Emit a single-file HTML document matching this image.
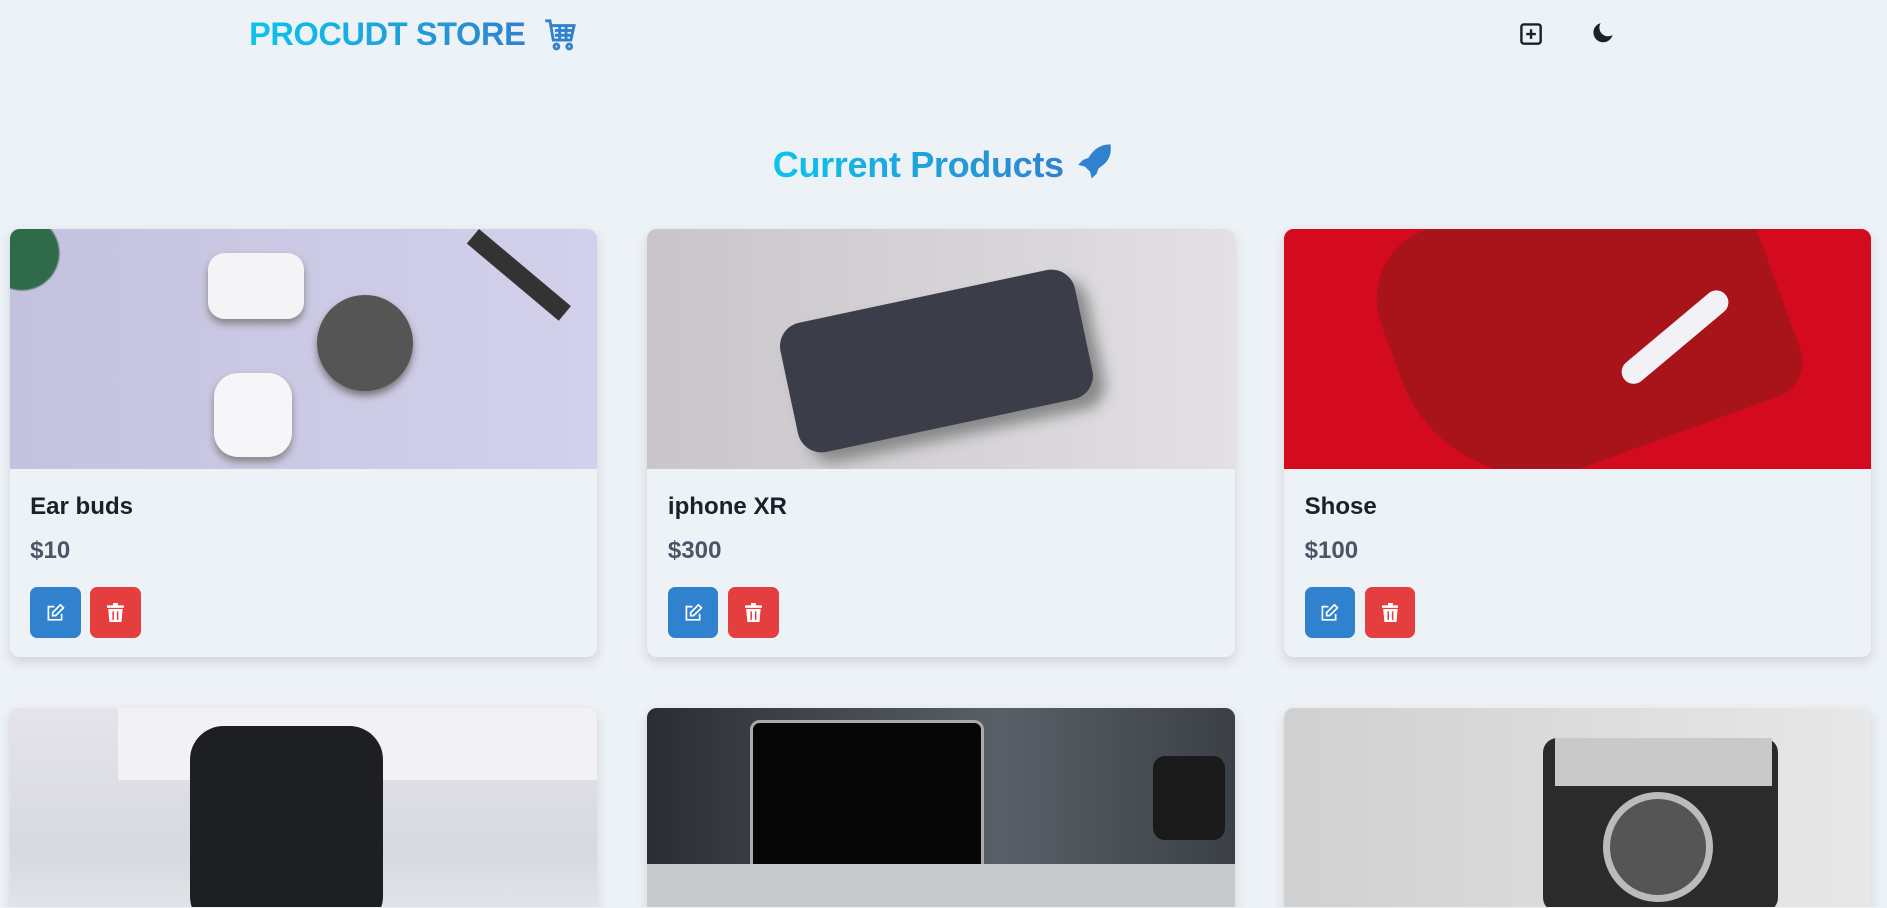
<!DOCTYPE html>
<html><head><meta charset="utf-8"><style>
html,body{margin:0;padding:0;background:#edf2f7;overflow:hidden;width:1887px;height:908px}
#w{zoom:1.2035;width:1568px;height:754px;position:relative;overflow:hidden;font-family:"Liberation Sans",Arial,sans-serif}
.grad{background:linear-gradient(90deg,#0bc5ea,#3182ce);-webkit-background-clip:text;background-clip:text;color:transparent;font-weight:bold}
.logo{position:absolute;left:207px;top:13px;font-size:27px;letter-spacing:-0.3px}
.title{position:absolute;left:0;width:1568px;top:117px;text-align:center;font-size:30px;letter-spacing:-0.3px}
.ico{position:absolute}
.card{position:absolute;width:488px;height:356px;border-radius:8px;background:#edf2f7;box-shadow:0 4px 10px rgba(0,0,0,.13);overflow:hidden}
.img{height:200px;position:relative;overflow:hidden}
.name{position:absolute;left:17px;top:220px;font-size:20px;font-weight:bold;color:#1a202c}
.price{position:absolute;left:17px;top:256px;font-size:20px;font-weight:bold;color:#4a5568}
.b{position:absolute;top:298px;width:42px;height:42px;border-radius:6px;display:flex;align-items:center;justify-content:center}
.e{left:17px;background:#3182ce}.d{left:67px;background:#e53e3e}
</style></head><body><div id="w">
<div class="logo"><span class="grad">PROCUDT STORE</span></div>
<svg class="ico" style="left:450px;top:13px" width="32" height="32" viewBox="0 0 24 24" fill="none" stroke="#3182ce" stroke-width="1.8"><path d="M2 3h3l2 12h11l2-9H6"/><path d="M8 9h11M8 12h10M11 6v9M15 6v9"/><circle cx="9" cy="19" r="1.5"/><circle cx="17" cy="19" r="1.5"/></svg>
<svg class="ico" style="left:1262px;top:18px" width="20" height="20" viewBox="0 0 20 20" fill="none" stroke="#1a202c" stroke-width="2"><rect x="2" y="2" width="16" height="16" rx="2"/><path d="M10 6v8M6 10h8"/></svg>
<svg class="ico" style="left:1323px;top:18px" width="18" height="18" viewBox="0 0 20 20"><path d="M8 1a9 9 0 1 0 11 11A8 8 0 0 1 8 1z" fill="#1a202c"/></svg>
<div class="title"><span class="grad">Current Products</span> <svg style="vertical-align:-4px" width="34" height="34" viewBox="0 0 24 24"><path d="M22 2c-6 0-10 3-13 8l-3 1-3 3 4 1 3 3 1 4 3-3 1-3c5-3 8-7 7-14z" fill="#3182ce"/></svg></div>

<div class="card" style="left:8px;top:190px"><div class="img" style="background:linear-gradient(90deg,#c4c2de,#d2d0ea)">
<div style="position:absolute;left:0;top:0;width:60px;height:70px;background:radial-gradient(circle at 10px 20px,#2f6b4a 30px,transparent 32px)"></div>
<div style="position:absolute;left:165px;top:20px;width:80px;height:55px;border-radius:14px;background:#f4f4f6;box-shadow:0 4px 6px #888"></div>
<div style="position:absolute;left:255px;top:55px;width:80px;height:80px;border-radius:50%;background:#555;box-shadow:0 4px 6px #777"></div>
<div style="position:absolute;left:170px;top:120px;width:65px;height:70px;border-radius:20px;background:#f6f6f8;box-shadow:0 4px 6px #888"></div>
<div style="position:absolute;left:390px;top:0;width:100px;height:16px;background:#333;transform:rotate(40deg);transform-origin:0 0"></div>
</div><div class="name">Ear buds</div><div class="price">$10</div>
<div class="b e"><svg width="16" height="16" viewBox="0 0 16 16" fill="none" stroke="#fff" stroke-width="1.4"><path d="M7 3H2v11h11V9"/><path d="M12 1.5l2.5 2.5L8 10.5H5.5V8z"/></svg></div>
<div class="b d"><svg width="14" height="16" viewBox="0 0 14 16" fill="#fff"><path d="M5 0h4v2h5v2H0V2h5z"/><path d="M1 5h12l-1 11H2z"/><path d="M4.5 7h1.3v7H4.5zM8.2 7h1.3v7H8.2z" fill="#e53e3e"/></svg></div></div>

<div class="card" style="left:538px;top:190px"><div class="img" style="background:linear-gradient(90deg,#c9c5ca,#e2e0e3)">
<div style="position:absolute;left:115px;top:55px;width:250px;height:110px;border-radius:20px;background:#3b3e48;transform:rotate(-12deg);box-shadow:8px 10px 12px #888"></div>
</div><div class="name">iphone XR</div><div class="price">$300</div>
<div class="b e"><svg width="16" height="16" viewBox="0 0 16 16" fill="none" stroke="#fff" stroke-width="1.4"><path d="M7 3H2v11h11V9"/><path d="M12 1.5l2.5 2.5L8 10.5H5.5V8z"/></svg></div>
<div class="b d"><svg width="14" height="16" viewBox="0 0 14 16" fill="#fff"><path d="M5 0h4v2h5v2H0V2h5z"/><path d="M1 5h12l-1 11H2z"/><path d="M4.5 7h1.3v7H4.5zM8.2 7h1.3v7H8.2z" fill="#e53e3e"/></svg></div></div>

<div class="card" style="left:1067px;top:190px"><div class="img" style="background:#d40a1e">
<div style="position:absolute;left:90px;top:-40px;width:320px;height:230px;border-radius:60px 40px 30px 120px;background:#a8141a;transform:rotate(-20deg)"></div>
<div style="position:absolute;left:270px;top:80px;width:110px;height:20px;border-radius:10px;background:#f2f2f6;transform:rotate(-40deg)"></div>
</div><div class="name">Shose</div><div class="price">$100</div>
<div class="b e"><svg width="16" height="16" viewBox="0 0 16 16" fill="none" stroke="#fff" stroke-width="1.4"><path d="M7 3H2v11h11V9"/><path d="M12 1.5l2.5 2.5L8 10.5H5.5V8z"/></svg></div>
<div class="b d"><svg width="14" height="16" viewBox="0 0 14 16" fill="#fff"><path d="M5 0h4v2h5v2H0V2h5z"/><path d="M1 5h12l-1 11H2z"/><path d="M4.5 7h1.3v7H4.5zM8.2 7h1.3v7H8.2z" fill="#e53e3e"/></svg></div></div>

<div class="card" style="left:8px;top:588px;height:200px"><div class="img" style="background:linear-gradient(180deg,#e4e4ea 0,#d8d8e0 60%,#eaeaf0)">
<div style="position:absolute;left:90px;top:0;width:400px;height:60px;background:#f2f2f6"></div>
<div style="position:absolute;left:150px;top:15px;width:160px;height:170px;border-radius:28px;background:#1d1f22"></div>
</div></div>
<div class="card" style="left:538px;top:588px;height:200px"><div class="img" style="background:linear-gradient(90deg,#2a2e33,#5a6068 60%,#3b4046)">
<div style="position:absolute;left:85px;top:10px;width:190px;height:150px;border-radius:8px;background:#060606;border:3px solid #aaa"></div>
<div style="position:absolute;left:0;top:130px;width:488px;height:70px;background:#c8c9cc"></div>
<div style="position:absolute;left:420px;top:40px;width:60px;height:70px;border-radius:10px;background:#1a1a1a"></div>
</div></div>
<div class="card" style="left:1067px;top:588px;height:200px"><div class="img" style="background:linear-gradient(90deg,#d0d0d0,#e8e8e8)">
<div style="position:absolute;left:215px;top:25px;width:195px;height:145px;border-radius:12px;background:#2b2b2b"></div>
<div style="position:absolute;left:225px;top:25px;width:180px;height:40px;background:#c9c9c9"></div>
<div style="position:absolute;left:265px;top:70px;width:80px;height:80px;border-radius:50%;background:#555;border:6px solid #bbb"></div>
</div></div>
</div></body></html>
